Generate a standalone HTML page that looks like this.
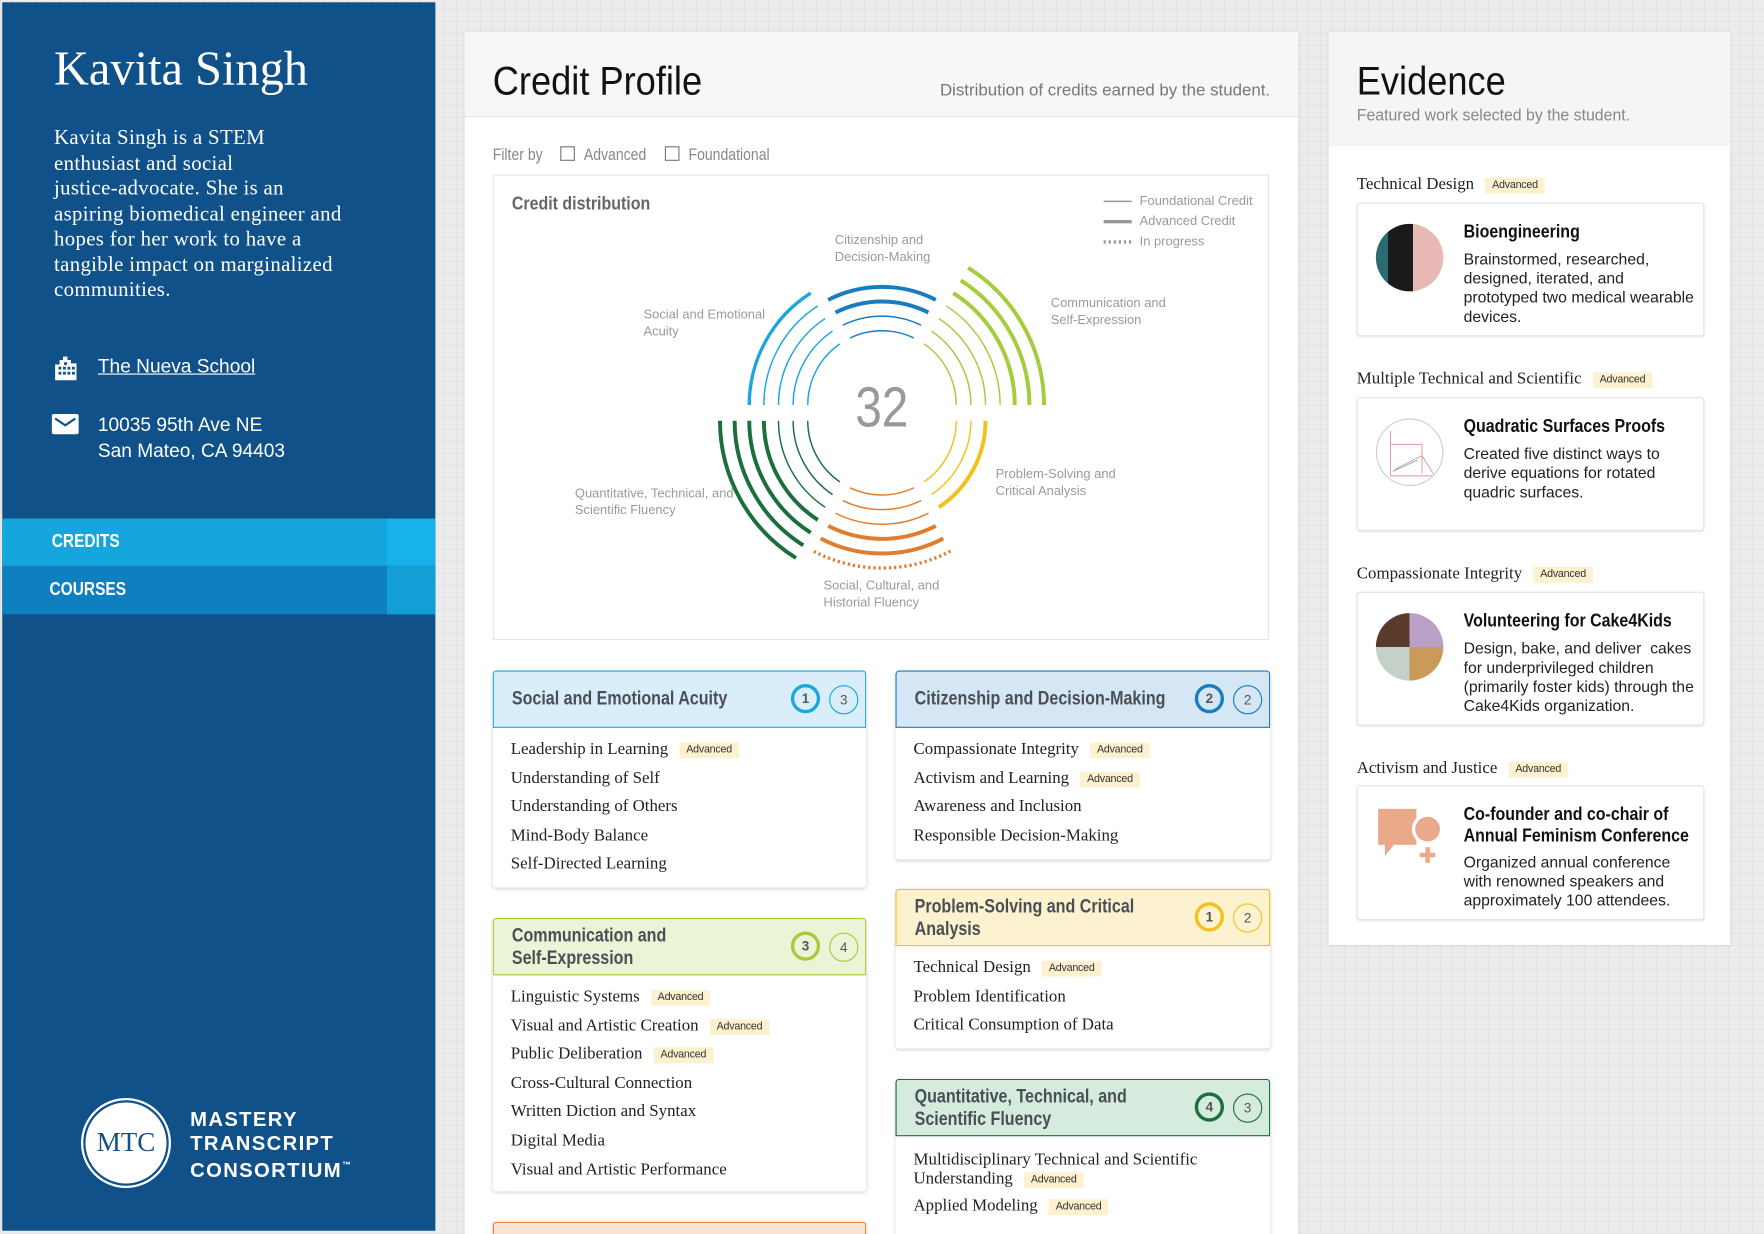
<!DOCTYPE html>
<html><head><meta charset="utf-8">
<style>
html,body{margin:0;padding:0;width:1764px;height:1234px;overflow:hidden;}
body{background-color:#ececec;background-image:repeating-linear-gradient(0deg,#e2e2e2 0,#e2e2e2 1px,transparent 1px,transparent 12px),repeating-linear-gradient(90deg,#e2e2e2 0,#e2e2e2 1px,transparent 1px,transparent 12px);}
#w{position:absolute;left:0;top:0;width:1568px;height:1097px;transform:scale(1.125);transform-origin:0 0;font-family:"Liberation Sans",sans-serif;overflow:hidden;}
.a{position:absolute;}
.serif{font-family:"Liberation Serif",serif;}
.cond{font-family:"Liberation Sans",sans-serif;}
.sx{display:inline-block;transform:scaleX(.86);transform-origin:0 0;white-space:nowrap;}
#side{left:2px;top:2px;width:385px;height:1092px;background:#105189;color:#fff;}
.card{position:absolute;background:#fff;border-radius:3px;box-shadow:0 1px 3px rgba(0,0,0,.18);overflow:hidden;}
.hd{position:absolute;left:0;top:0;right:0;border:1px solid;border-radius:3px 3px 0 0;box-sizing:border-box;}
.hd .t{position:absolute;left:16px;font-weight:bold;font-size:17px;color:#4a4f55;line-height:20px;transform:scaleX(.84);transform-origin:0 0;white-space:nowrap;}
.b1,.b2{position:absolute;width:20px;height:20px;border-radius:50%;text-align:center;line-height:20px;font-size:12px;color:#555;}
.b1{border:3px solid;font-weight:bold;}
.b2{border:1px solid;width:24px;height:24px;line-height:24px;}
.items{position:absolute;left:16px;font-family:"Liberation Serif",serif;font-size:15px;color:#222;}
.items div{height:25.6px;line-height:25.6px;white-space:nowrap;}
.adv{display:inline-block;background:#fdf1cf;font-family:"Liberation Sans",sans-serif;font-size:9.5px;line-height:14px;padding:0 6px;margin-left:10px;color:#333;vertical-align:1px;letter-spacing:-0.2px;}
.lbl{position:absolute;font-size:11.5px;color:#9a9a9a;line-height:15px;}
.ev{position:absolute;left:1206px;width:307px;background:#fff;border:1px solid #e2e2e2;border-radius:3px;box-shadow:0 1px 2px rgba(0,0,0,.08);}
.evl{position:absolute;left:1206px;font-family:"Liberation Serif",serif;font-size:15px;color:#222;}
.ev .t{position:absolute;left:94px;top:16px;font-weight:bold;font-size:16.5px;color:#111;line-height:19px;transform:scaleX(.86);transform-origin:0 0;white-space:nowrap;}
.ev .d{position:absolute;left:94px;font-size:14px;color:#222;line-height:17px;width:205px;}
.ev .im{position:absolute;left:16px;top:18px;width:60px;height:60px;border-radius:50%;overflow:hidden;}
</style></head><body><div id="w">

<div id="side" class="a">
  <div class="a serif" style="left:46px;top:35px;font-size:43px;line-height:50px;">Kavita Singh</div>
  <div class="a serif" style="left:46px;top:110px;font-size:18.5px;line-height:22.5px;letter-spacing:.3px;white-space:nowrap;">Kavita Singh is a STEM<br>enthusiast and social<br>justice-advocate. She is an<br>aspiring biomedical engineer and<br>hopes for her work to have a<br>tangible impact on marginalized<br>communities.</div>
  <svg class="a" style="left:45px;top:313px" width="24" height="24" viewBox="0 0 24 24"><path fill="#fff" d="M9 2h4v3h3v3h5v15H2V9h4V5h3z"/><g fill="#105189"><rect x="5" y="11" width="2.5" height="2.5"/><rect x="9" y="11" width="2.5" height="2.5"/><rect x="13" y="11" width="2.5" height="2.5"/><rect x="17" y="11" width="2.5" height="2.5"/><rect x="5" y="15.5" width="2.5" height="2.5"/><rect x="9" y="15.5" width="2.5" height="2.5"/><rect x="13" y="15.5" width="2.5" height="2.5"/><rect x="17" y="15.5" width="2.5" height="2.5"/><rect x="10" y="7" width="2.5" height="2.5"/></g></svg>
  <div class="a" style="left:85px;top:313px;font-size:17px;text-decoration:underline;line-height:22px;">The Nueva School</div>
  <svg class="a" style="left:44px;top:366px" width="24" height="20" viewBox="0 0 24 20"><rect x="0" y="0" width="24" height="18" rx="2" fill="#fff"/><path d="M3 4l9 6 9-6" fill="none" stroke="#105189" stroke-width="2"/></svg>
  <div class="a" style="left:85px;top:365px;font-size:17px;line-height:22.5px;">10035 95th Ave NE<br>San Mateo, CA 94403</div>
  <div class="a" style="left:0;top:459px;width:385px;height:42px;background:#14a6dc;"></div>
  <div class="a" style="left:342px;top:459px;width:43px;height:42px;background:#17b3e8;"></div>
  <div class="a" style="left:44px;top:459px;line-height:42px;font-size:16px;font-weight:bold;"><span class="sx">CREDITS</span></div>
  <div class="a" style="left:0;top:501px;width:385px;height:43px;background:#0f7fbf;"></div>
  <div class="a" style="left:342px;top:501px;width:43px;height:43px;background:#139fd6;"></div>
  <div class="a" style="left:42px;top:501px;line-height:43px;font-size:16px;font-weight:bold;"><span class="sx">COURSES</span></div>
  <div class="a" style="left:70px;top:974px;width:76px;height:76px;border-radius:50%;border:2px solid #fff;"></div>
  <div class="a" style="left:74px;top:978px;width:72px;height:72px;border-radius:50%;background:#fff;"></div>
  <div class="a serif" style="left:74px;top:978px;width:72px;line-height:72px;text-align:center;color:#105189;font-size:24px;">MTC</div>
  <div class="a" style="left:167px;top:983px;font-size:18px;font-weight:bold;letter-spacing:1.2px;line-height:20.5px;">MASTERY<br>TRANSCRIPT<br>CONSORTIUM<span style="font-size:8px;vertical-align:8px;">™</span></div>
</div>

<div class="a" style="left:413px;top:28px;width:741px;height:1069px;background:#fff;box-shadow:0 0 3px rgba(0,0,0,.12);"></div>
<div class="a" style="left:413px;top:28px;width:741px;height:75px;background:#f7f7f7;border-bottom:1px solid #e6e6e6;"></div>
<div class="a" style="left:438px;top:52px;font-size:35px;line-height:42px;color:#111;"><span class="sx" style="transform:scaleX(.92)">Credit Profile</span></div>
<div class="a" style="left:780px;top:72px;width:349px;text-align:right;font-size:15px;color:#777;">Distribution of credits earned by the student.</div>
<div class="a" style="left:438px;top:129px;font-size:14.5px;color:#888;line-height:18px;"><span class="sx">Filter by</span></div>
<div class="a" style="left:498px;top:130px;width:13px;height:13px;border:1px solid #777;box-sizing:border-box;"></div>
<div class="a" style="left:519px;top:129px;font-size:14.5px;color:#888;line-height:18px;"><span class="sx">Advanced</span></div>
<div class="a" style="left:591px;top:130px;width:13px;height:13px;border:1px solid #777;box-sizing:border-box;"></div>
<div class="a" style="left:612px;top:129px;font-size:14.5px;color:#888;line-height:18px;"><span class="sx">Foundational</span></div>

<div class="a" style="left:438px;top:155px;width:690px;height:414px;border:1px solid #e4e4e4;box-sizing:border-box;"></div>
<div class="a" style="left:455px;top:172px;font-size:16.5px;font-weight:bold;color:#666;"><span class="sx">Credit distribution</span></div>
<svg class="a" style="left:0;top:0" width="1568" height="1097" viewBox="0 0 1568 1097">
  <g stroke="#999" fill="none"><line x1="981" y1="179" x2="1006" y2="179" stroke-width="1.3"/><line x1="981" y1="197" x2="1006" y2="197" stroke-width="3"/><line x1="981" y1="215" x2="1006" y2="215" stroke-width="3" stroke-dasharray="2 2.5"/></g>
  <g fill="none">
    <g stroke="#1ba6de">
      <circle cx="784" cy="360" r="66" pathLength="360" stroke-dasharray="55.5 400" transform="rotate(180 784 360)" stroke-width="1.3"/>
      <circle cx="784" cy="360" r="79" pathLength="360" stroke-dasharray="56.2 400" transform="rotate(180 784 360)" stroke-width="1.3"/>
      <circle cx="784" cy="360" r="92" pathLength="360" stroke-dasharray="56.7 400" transform="rotate(180 784 360)" stroke-width="1.3"/>
      <circle cx="784" cy="360" r="105" pathLength="360" stroke-dasharray="57.1 400" transform="rotate(180 784 360)" stroke-width="1.3"/>
      <circle cx="784" cy="360" r="118" pathLength="360" stroke-dasharray="57.5 400" transform="rotate(180 784 360)" stroke-width="3"/>
    </g>
    <g stroke="#1a7cc0">
      <circle cx="784" cy="360" r="66" pathLength="360" stroke-dasharray="51 400" transform="rotate(-115.5 784 360)" stroke-width="1.3"/>
      <circle cx="784" cy="360" r="79" pathLength="360" stroke-dasharray="52.4 400" transform="rotate(-116.2 784 360)" stroke-width="1.3"/>
      <circle cx="784" cy="360" r="92" pathLength="360" stroke-dasharray="53.4 400" transform="rotate(-116.7 784 360)" stroke-width="3.5"/>
      <circle cx="784" cy="360" r="105" pathLength="360" stroke-dasharray="54.2 400" transform="rotate(-117.1 784 360)" stroke-width="3.5"/>
    </g>
    <g stroke="#a6cb3c">
      <circle cx="784" cy="360" r="66" pathLength="360" stroke-dasharray="55.5 400" transform="rotate(-55.5 784 360)" stroke-width="1.3"/>
      <circle cx="784" cy="360" r="79" pathLength="360" stroke-dasharray="56.2 400" transform="rotate(-56.2 784 360)" stroke-width="1.3"/>
      <circle cx="784" cy="360" r="92" pathLength="360" stroke-dasharray="56.7 400" transform="rotate(-56.7 784 360)" stroke-width="1.3"/>
      <circle cx="784" cy="360" r="105" pathLength="360" stroke-dasharray="57.1 400" transform="rotate(-57.1 784 360)" stroke-width="1.3"/>
      <circle cx="784" cy="360" r="118" pathLength="360" stroke-dasharray="57.5 400" transform="rotate(-57.5 784 360)" stroke-width="3.5"/>
      <circle cx="784" cy="360" r="131" pathLength="360" stroke-dasharray="57.7 400" transform="rotate(-57.7 784 360)" stroke-width="3.5"/>
      <circle cx="784" cy="360" r="144" pathLength="360" stroke-dasharray="57.9 400" transform="rotate(-57.9 784 360)" stroke-width="3.5"/>
    </g>
    <g stroke="#f1c21b">
      <circle cx="784" cy="374" r="66" pathLength="360" stroke-dasharray="55.5 400" stroke-width="1.3"/>
      <circle cx="784" cy="374" r="79" pathLength="360" stroke-dasharray="56.2 400" stroke-width="1.3"/>
      <circle cx="784" cy="374" r="92" pathLength="360" stroke-dasharray="56.7 400" stroke-width="3.5"/>
    </g>
    <g stroke="#e27d2e">
      <circle cx="784" cy="374" r="66" pathLength="360" stroke-dasharray="51 400" transform="rotate(64.5 784 374)" stroke-width="1.3"/>
      <circle cx="784" cy="374" r="79" pathLength="360" stroke-dasharray="52.4 400" transform="rotate(63.8 784 374)" stroke-width="1.3"/>
      <circle cx="784" cy="374" r="92" pathLength="360" stroke-dasharray="53.4 400" transform="rotate(63.3 784 374)" stroke-width="1.3"/>
      <circle cx="784" cy="374" r="105" pathLength="360" stroke-dasharray="54.2 400" transform="rotate(62.9 784 374)" stroke-width="3.5"/>
      <circle cx="784" cy="374" r="118" pathLength="360" stroke-dasharray="55 400" transform="rotate(62.5 784 374)" stroke-width="3.5"/>
      <path d="M844.9 489.9 A131 131 0 0 1 723.1 489.9" stroke-width="3" stroke-dasharray="2 2.6"/>
    </g>
    <g stroke="#1a6f3d">
      <circle cx="784" cy="374" r="66" pathLength="360" stroke-dasharray="55.5 400" transform="rotate(124.5 784 374)" stroke-width="1.3"/>
      <circle cx="784" cy="374" r="79" pathLength="360" stroke-dasharray="56.2 400" transform="rotate(123.8 784 374)" stroke-width="1.3"/>
      <circle cx="784" cy="374" r="92" pathLength="360" stroke-dasharray="56.7 400" transform="rotate(123.3 784 374)" stroke-width="1.3"/>
      <circle cx="784" cy="374" r="105" pathLength="360" stroke-dasharray="57.1 400" transform="rotate(122.9 784 374)" stroke-width="3.5"/>
      <circle cx="784" cy="374" r="118" pathLength="360" stroke-dasharray="57.5 400" transform="rotate(122.5 784 374)" stroke-width="3.5"/>
      <circle cx="784" cy="374" r="131" pathLength="360" stroke-dasharray="57.7 400" transform="rotate(122.3 784 374)" stroke-width="3.5"/>
      <circle cx="784" cy="374" r="144" pathLength="360" stroke-dasharray="57.9 400" transform="rotate(122.1 784 374)" stroke-width="3.5"/>
    </g>
  </g>
</svg>
<div class="lbl" style="left:1013px;top:172px;">Foundational Credit<br><span style="line-height:21px">Advanced Credit</span><br>In progress</div>
<div class="a" style="left:734px;top:336px;width:100px;text-align:center;font-size:50px;line-height:52px;color:#999;"><span style="display:inline-block;transform:scaleX(.85)">32</span></div>
<div class="lbl" style="left:742px;top:207px;">Citizenship and<br>Decision-Making</div>
<div class="lbl" style="left:572px;top:273px;">Social and Emotional<br>Acuity</div>
<div class="lbl" style="left:934px;top:263px;">Communication and<br>Self-Expression</div>
<div class="lbl" style="left:885px;top:415px;">Problem-Solving and<br>Critical Analysis</div>
<div class="lbl" style="left:511px;top:432px;">Quantitative, Technical, and<br>Scientific Fluency</div>
<div class="lbl" style="left:732px;top:514px;">Social, Cultural, and<br>Historial Fluency</div>

<div class="card" style="left:438px;top:596px;width:332px;height:193px;">
  <div class="hd" style="height:51px;background:#d9eefa;border-color:#1ba6de;"><div class="t" style="top:14px;">Social and Emotional Acuity</div>
  <div class="b1" style="left:264px;top:11px;border-color:#1ba6de;">1</div><div class="b2" style="left:298px;top:12px;border-color:#1ba6de;">3</div></div>
  <div class="items" style="top:58px;"><div>Leadership in Learning<span class="adv">Advanced</span></div><div>Understanding of Self</div><div>Understanding of Others</div><div>Mind-Body Balance</div><div>Self-Directed Learning</div></div>
</div>
<div class="card" style="left:796px;top:596px;width:333px;height:168px;">
  <div class="hd" style="height:51px;background:#d5e6f4;border-color:#1a7cc0;"><div class="t" style="top:14px;">Citizenship and Decision-Making</div>
  <div class="b1" style="left:265px;top:11px;border-color:#1a7cc0;">2</div><div class="b2" style="left:299px;top:12px;border-color:#1a7cc0;">2</div></div>
  <div class="items" style="top:58px;"><div>Compassionate Integrity<span class="adv">Advanced</span></div><div>Activism and Learning<span class="adv">Advanced</span></div><div>Awareness and Inclusion</div><div>Responsible Decision-Making</div></div>
</div>
<div class="card" style="left:438px;top:816px;width:332px;height:243px;">
  <div class="hd" style="height:51px;background:#ecf4d8;border-color:#a6cb3c;"><div class="t" style="top:5px;">Communication and<br>Self-Expression</div>
  <div class="b1" style="left:264px;top:11px;border-color:#a6cb3c;">3</div><div class="b2" style="left:298px;top:12px;border-color:#a6cb3c;">4</div></div>
  <div class="items" style="top:58px;"><div>Linguistic Systems<span class="adv">Advanced</span></div><div>Visual and Artistic Creation<span class="adv">Advanced</span></div><div>Public Deliberation<span class="adv">Advanced</span></div><div>Cross-Cultural Connection</div><div>Written Diction and Syntax</div><div>Digital Media</div><div>Visual and Artistic Performance</div></div>
</div>
<div class="card" style="left:796px;top:790px;width:333px;height:142px;">
  <div class="hd" style="height:51px;background:#fdf2cf;border-color:#f1c21b;"><div class="t" style="top:5px;">Problem-Solving and Critical<br>Analysis</div>
  <div class="b1" style="left:265px;top:11px;border-color:#f1c21b;">1</div><div class="b2" style="left:299px;top:12px;border-color:#f1c21b;">2</div></div>
  <div class="items" style="top:58px;"><div>Technical Design<span class="adv">Advanced</span></div><div>Problem Identification</div><div>Critical Consumption of Data</div></div>
</div>
<div class="card" style="left:796px;top:959px;width:333px;height:160px;">
  <div class="hd" style="height:51px;background:#d5ebde;border-color:#1a6f3d;"><div class="t" style="top:5px;">Quantitative, Technical, and<br>Scientific Fluency</div>
  <div class="b1" style="left:265px;top:11px;border-color:#1a6f3d;">4</div><div class="b2" style="left:299px;top:12px;border-color:#1a6f3d;">3</div></div>
  <div class="items" style="top:64px;"><div style="height:auto;line-height:16.5px;">Multidisciplinary Technical and Scientific<br>Understanding<span class="adv">Advanced</span></div><div style="margin-top:4px;">Applied Modeling<span class="adv">Advanced</span></div></div>
</div>
<div class="card" style="left:438px;top:1086px;width:332px;height:40px;">
  <div class="hd" style="height:51px;background:#fbe4d3;border-color:#e27d2e;"><div class="t" style="top:8px;">Social, Cultural, and Historical</div></div>
</div>

<div class="a" style="left:1181px;top:28px;width:357px;height:812px;background:#fff;box-shadow:0 0 3px rgba(0,0,0,.12);"></div>
<div class="a" style="left:1181px;top:28px;width:357px;height:102px;background:#f5f5f5;"></div>
<div class="a" style="left:1206px;top:52px;font-size:35px;line-height:42px;color:#111;"><span class="sx" style="transform:scaleX(.92)">Evidence</span></div>
<div class="a" style="left:1206px;top:94px;font-size:15px;color:#888;"><span class="sx" style="transform:scaleX(.94)">Featured work selected by the student.</span></div>

<div class="evl" style="top:156px;">Technical Design<span class="adv">Advanced</span></div>
<div class="ev" style="top:180px;height:117px;">
  <div class="im" style="background:linear-gradient(90deg,#2b6c72 0 18%,#1a1a1a 18% 55%,#e9b9b5 55%);"></div>
  <div class="t">Bioengineering</div>
  <div class="d" style="top:41px;">Brainstormed, researched, designed, iterated, and prototyped two medical wearable devices.</div>
</div>
<div class="evl" style="top:329px;">Multiple Technical and Scientific<span class="adv">Advanced</span></div>
<div class="ev" style="top:353px;height:117px;">
  <div class="im" style="background:#fff;border:1px solid #ccc;box-sizing:border-box;"><svg width="60" height="60"><path d="M12 10v40h40M12 22h28v26M16 44l24-12 10 16" fill="none" stroke="#d99" stroke-width="0.8"/><path d="M14 46l22-10" stroke="#79c" stroke-width="0.8"/></svg></div>
  <div class="t">Quadratic Surfaces Proofs</div>
  <div class="d" style="top:41px;">Created five distinct ways to derive equations for rotated quadric surfaces.</div>
</div>
<div class="evl" style="top:502px;">Compassionate Integrity<span class="adv">Advanced</span></div>
<div class="ev" style="top:526px;height:117px;">
  <div class="im" style="background:conic-gradient(#b8a0c8 0 25%,#c99a5a 25% 50%,#c5d0c8 50% 75%,#5a3a2a 75%);"></div>
  <div class="t">Volunteering for Cake4Kids</div>
  <div class="d" style="top:41px;">Design, bake, and deliver&nbsp; cakes for underprivileged children (primarily foster kids) through the Cake4Kids organization.</div>
</div>
<div class="evl" style="top:675px;">Activism and Justice<span class="adv">Advanced</span></div>
<div class="ev" style="top:698px;height:118px;">
  <svg class="a" style="left:14px;top:16px" width="66" height="60" viewBox="0 0 66 60"><path d="M4 4h34v32H18l-8 10v-10H4z" fill="#eaa98b"/><circle cx="48" cy="22" r="14" fill="#fff"/><circle cx="48" cy="22" r="11" fill="#eaa98b"/><path d="M46 38h4v5h5v4h-5v5h-4v-5h-5v-4h5z" fill="#eaa98b"/></svg>
  <div class="t">Co-founder and co-chair of<br>Annual Feminism Conference</div>
  <div class="d" style="top:59px;">Organized annual conference with renowned speakers and approximately 100 attendees.</div>
</div>

</div></body></html>
